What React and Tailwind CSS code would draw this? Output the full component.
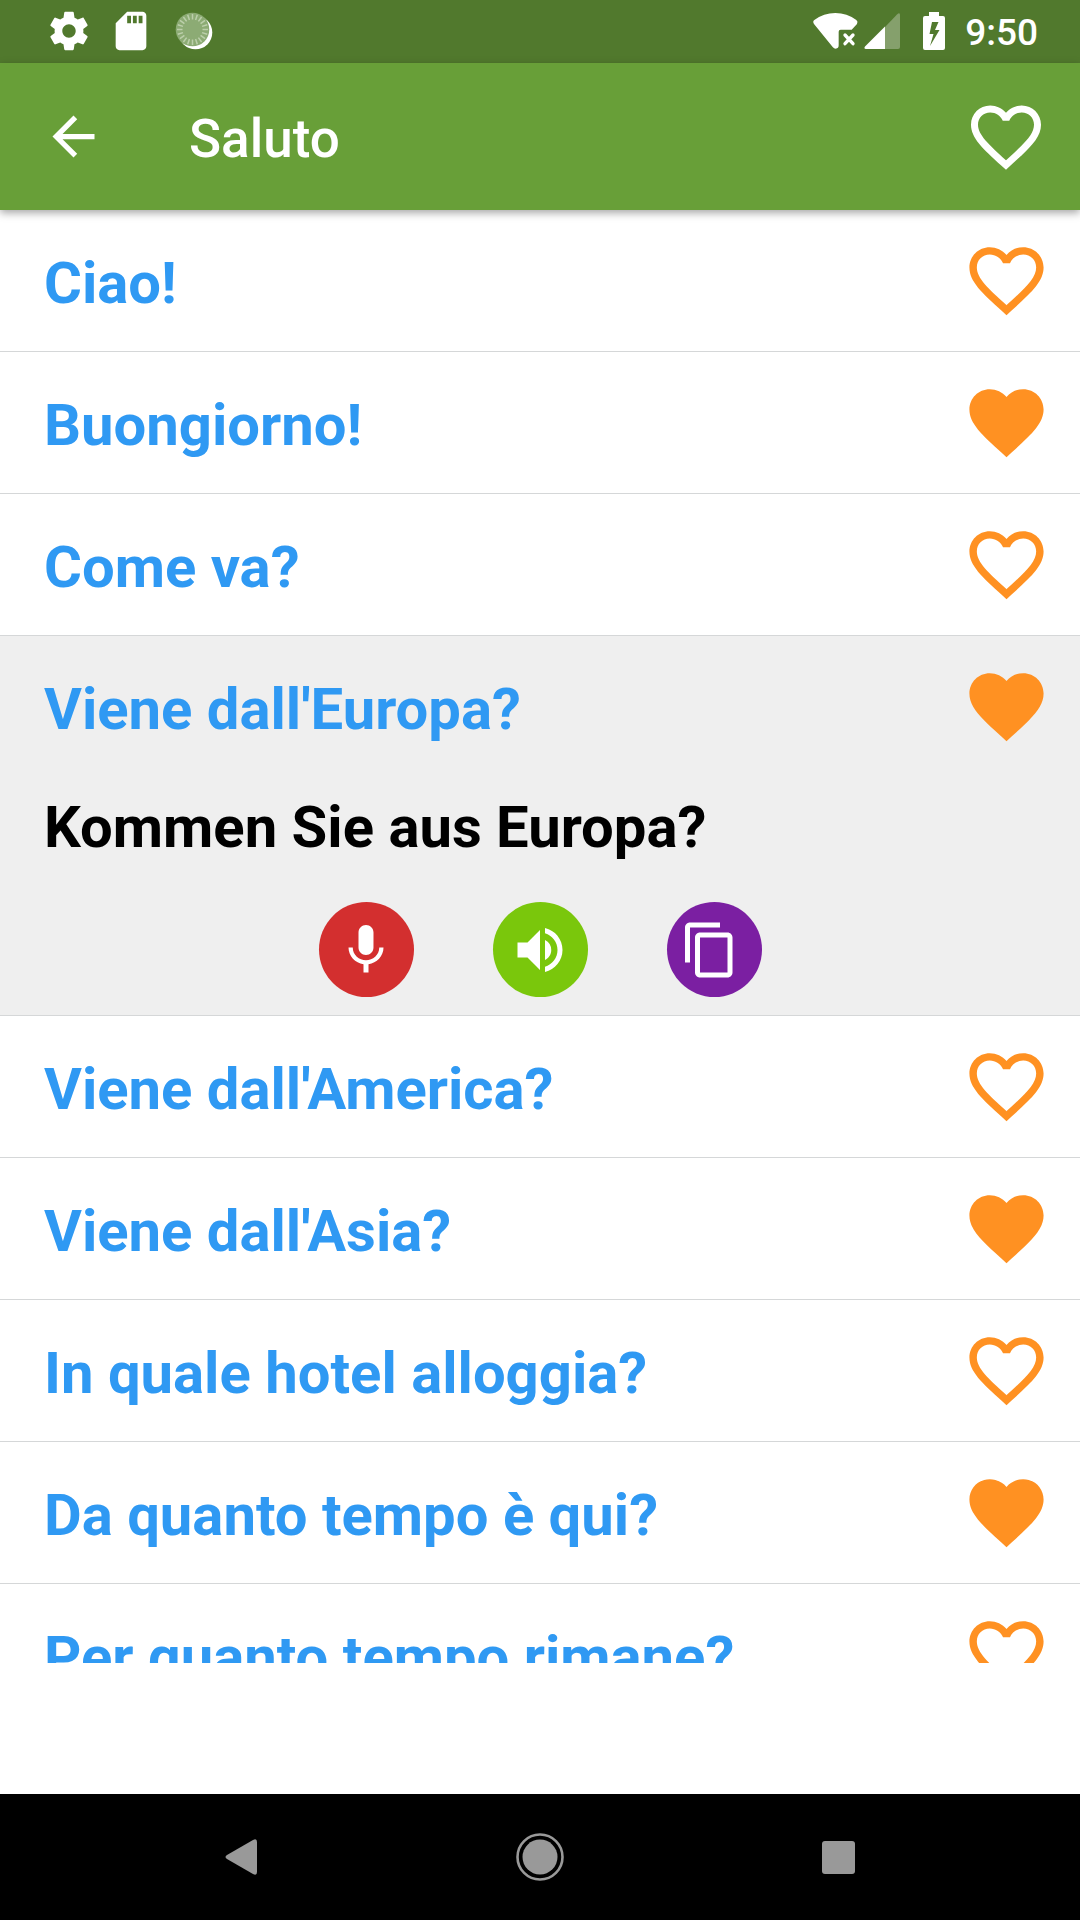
import { useState } from "react"
import {
	MdArrowBack,
	MdContentCopy,
	MdFavorite,
	MdFavoriteBorder,
	MdVolumeUp,
} from "react-icons/md"

const PHRASES = [
	{ id: 1, text: "Ciao!", translation: "Hallo!", favorite: false },
	{ id: 2, text: "Buongiorno!", translation: "Guten Tag!", favorite: true },
	{ id: 3, text: "Come va?", translation: "Wie geht's?", favorite: false },
	{
		id: 4,
		text: "Viene dall'Europa?",
		translation: "Kommen Sie aus Europa?",
		favorite: true,
	},
	{
		id: 5,
		text: "Viene dall'America?",
		translation: "Kommen Sie aus Amerika?",
		favorite: false,
	},
	{
		id: 6,
		text: "Viene dall'Asia?",
		translation: "Kommen Sie aus Asien?",
		favorite: true,
	},
	{
		id: 7,
		text: "In quale hotel alloggia?",
		translation: "In welchem Hotel wohnen Sie?",
		favorite: false,
	},
	{
		id: 8,
		text: "Da quanto tempo è qui?",
		translation: "Wie lange sind Sie schon hier?",
		favorite: true,
	},
	{
		id: 9,
		text: "Per quanto tempo rimane?",
		translation: "Wie lange bleiben Sie?",
		favorite: false,
	},
]

// small ticks around the sync spinner
const TICKS = Array.from({ length: 20 }, (_, i) => i * 18)

function GearIcon() {
	return (
		<svg viewBox="0 0 24 24" className="size-[46px]" fill="currentColor">
			<path d="M19.43 12.98c.04-.32.07-.64.07-.98s-.03-.66-.07-.98l2.11-1.65c.19-.15.24-.42.12-.64l-2-3.46c-.12-.22-.39-.3-.61-.22l-2.49 1c-.52-.4-1.08-.73-1.69-.98l-.38-2.65C14.46 2.18 14.25 2 14 2h-4c-.25 0-.46.18-.49.42l-.38 2.65c-.61.25-1.17.59-1.69.98l-2.49-1c-.23-.09-.49 0-.61.22l-2 3.46c-.13.22-.07.49.12.64l2.11 1.65c-.04.32-.07.65-.07.98s.03.66.07.98l-2.11 1.65c-.19.15-.24.42-.12.64l2 3.46c.12.22.39.3.61.22l2.49-1c.52.4 1.08.73 1.69.98l.38 2.65c.03.24.24.42.49.42h4c.25 0 .46-.18.49-.42l.38-2.65c.61-.25 1.17-.59 1.69-.98l2.49 1c.23.09.49 0 .61-.22l2-3.46c.12-.22.07-.49-.12-.64l-2.11-1.65zM12 15.5c-1.93 0-3.5-1.57-3.5-3.5s1.57-3.5 3.5-3.5 3.5 1.57 3.5 3.5-1.57 3.5-3.5 3.5z" />
		</svg>
	)
}

function SdCardIcon() {
	return (
		<svg viewBox="0 0 24 24" className="size-[46px]" fill="currentColor">
			<path d="M18 2h-8L4.02 8 4 20c0 1.1.9 2 2 2h12c1.1 0 2-.9 2-2V4c0-1.1-.9-2-2-2zm-6 6h-2V4h2v4zm3 0h-2V4h2v4zm3 0h-2V4h2v4z" />
		</svg>
	)
}

function SpinnerIcon() {
	return (
		<svg viewBox="0 0 46 46" className="size-[46px]">
			<circle cx="25.500" cy="24.500" r="16.800" fill="#fff" />
			<circle cx="22.500" cy="21.500" r="16.800" fill="#8cab74" />
			{TICKS.map((a) => (
				<path
					key={a}
					d="M22.5 6v5.500"
					stroke="#bccfab"
					strokeWidth="1.5"
					transform={`rotate(${a} 22.5 21.5)`}
				/>
			))}
		</svg>
	)
}

function WifiIcon() {
	return (
		<svg
			viewBox="95 35 141 114"
			className="w-[47px] h-[38px]"
			fill="currentColor">
			<path d="M101 71Q96 64 102 59Q130 38 165 38T228 59Q234 64 230 71L214 88H181Q175 88 175 94V135Q175 145 166 145Q161 145 157 140Z" />
			<path
				d="M194 104l24 26M218 104l-24 26"
				stroke="currentColor"
				strokeWidth="10"
				strokeLinecap="round"
			/>
		</svg>
	)
}

function SignalIcon() {
	return (
		<svg viewBox="0 0 36 36" className="size-9" fill="currentColor">
			<path
				d="M21 14L33 1.5Q36 -1 36 2V34Q36 36 34 36H21Z"
				fill="#85a06c"
			/>
			<path d="M21 13.500V36H2Q-.5 36 1 33.500Z" />
		</svg>
	)
}

function BatteryIcon() {
	return (
		<svg
			viewBox="0 0 22 38"
			className="w-[22px] h-[38px]"
			fill="currentColor"
			fillRule="evenodd">
			<path d="M6 0H16V4H20Q22 4 22 6V36Q22 38 20 38H2Q0 38 0 36V6Q0 4 2 4H6ZM9 10L6.500 22H10.500L7 34L16.500 18H12L15.500 10Z" />
		</svg>
	)
}

function MicIcon() {
	return (
		<svg viewBox="0 0 24 24" className="size-15" fill="currentColor">
			<path d="M12 14c1.66 0 2.99-1.34 2.99-3L15 5c0-1.66-1.34-3-3-3S9 3.340 9 5v6c0 1.66 1.34 3 3 3zm5.3-3c0 3-2.54 5.1-5.3 5.1S6.7 14 6.7 11H5c0 3.410 2.720 6.230 6 6.720V21h2v-3.280c3.280-.480 6-3.300 6-6.720h-1.700z" />
		</svg>
	)
}

function StatusBar() {
	return (
		<div className="h-[63px] shrink-0 bg-[#51792d] text-white flex items-center justify-between pl-[46px] pr-[42px] pb-px">
			<div className="flex items-center gap-4">
				<GearIcon />
				<SdCardIcon />
				<SpinnerIcon />
			</div>
			<div className="flex items-center">
				<WifiIcon />
				<div className="ml-[5px]">
					<SignalIcon />
				</div>
				<div className="ml-[23px]">
					<BatteryIcon />
				</div>
				<span className="ml-5 pt-[3px] text-[37px] leading-[44px] font-medium">
					9:50
				</span>
			</div>
		</div>
	)
}

function AppBar({ title }) {
	return (
		<header className="relative z-10 h-[147px] shrink-0 bg-[#689f38] text-white flex items-center pl-[42px] pr-8 shadow-[0_3px_8px_rgba(0,0,0,0.35)]">
			<button aria-label="Back">
				<MdArrowBack className="size-[63px]" />
			</button>
			<h1 className="flex-1 pl-[84px] pt-1 text-[53px] leading-[62px] font-medium">
				{title}
			</h1>
			<button aria-label="Favorites">
				<MdFavoriteBorder className="size-[84px]" />
			</button>
		</header>
	)
}

function Phrase({ phrase, open, onToggle, onFavorite }) {
	const Heart = phrase.favorite ? MdFavorite : MdFavoriteBorder

	return (
		<li
			className={`border-b border-[#d5d7d8] ${open ? "bg-[#efefef]" : "bg-white"}`}>
			<div className="h-[141px] flex items-center justify-between pl-11 pr-[29px]">
				<button
					onClick={onToggle}
					aria-expanded={open}
					className="flex-1 pt-1 text-left text-[58px] leading-[68px] font-bold text-[#2f99f3]">
					{phrase.text}
				</button>
				<button
					onClick={onFavorite}
					aria-label="Toggle favorite"
					className="text-[#ff9122]">
					<Heart className="size-[89px]" />
				</button>
			</div>
			{open && (
				<div className="pt-4 pb-[18px]">
					<p className="pl-11 text-[58px] leading-[68px] font-bold text-black">
						{phrase.translation}
					</p>
					<div className="mt-[41px] flex justify-center gap-[79px] text-white">
						<button
							aria-label="Record"
							className="size-[95px] rounded-full bg-[#d32f2f] flex items-center justify-center">
							<MicIcon />
						</button>
						<button
							aria-label="Listen"
							className="size-[95px] rounded-full bg-[#7ac70c] flex items-center justify-center">
							<MdVolumeUp className="size-15" />
						</button>
						<button
							aria-label="Copy"
							className="size-[95px] rounded-full bg-[#7b1fa2] flex items-center justify-center pr-2">
							<MdContentCopy className="size-15" />
						</button>
					</div>
				</div>
			)}
		</li>
	)
}

function NavBar() {
	return (
		<nav className="h-[126px] shrink-0 bg-black text-[#999] grid grid-cols-3 items-center justify-items-center px-[92px]">
			<button aria-label="System back">
				<svg viewBox="0 0 32 36" className="w-8 h-9" fill="currentColor">
					<path d="M28 1Q32 -1 32 3V33Q32 37 28 35L2 20Q-1 18 2 16Z" />
				</svg>
			</button>
			<button aria-label="Home">
				<svg viewBox="0 0 48 48" className="size-12">
					<circle
						cx="24"
						cy="24"
						r="22.500"
						fill="none"
						stroke="currentColor"
						strokeWidth="2.600"
					/>
					<circle cx="24" cy="24" r="17.500" fill="currentColor" />
				</svg>
			</button>
			<button
				aria-label="Recent apps"
				className="size-[33px] rounded-[3px] bg-[#999]"
			/>
		</nav>
	)
}

export default function App() {
	const [phrases, setPhrases] = useState(PHRASES)
	const [openId, setOpenId] = useState(4)

	const toggleFavorite = (id) =>
		setPhrases((list) =>
			list.map((p) => (p.id === id ? { ...p, favorite: !p.favorite } : p))
		)

	return (
		<div className="h-screen flex flex-col bg-white font-['Roboto',sans-serif]">
			<StatusBar />
			<AppBar title="Saluto" />
			<ul className="flex-1 min-h-0 overflow-y-auto [scrollbar-width:none]">
				{phrases.map((p) => (
					<Phrase
						key={p.id}
						phrase={p}
						open={p.id === openId}
						onToggle={() => setOpenId(p.id === openId ? null : p.id)}
						onFavorite={() => toggleFavorite(p.id)}
					/>
				))}
			</ul>
			{/* banner slot */}
			<div className="h-[131px] shrink-0" />
			<NavBar />
		</div>
	)
}
